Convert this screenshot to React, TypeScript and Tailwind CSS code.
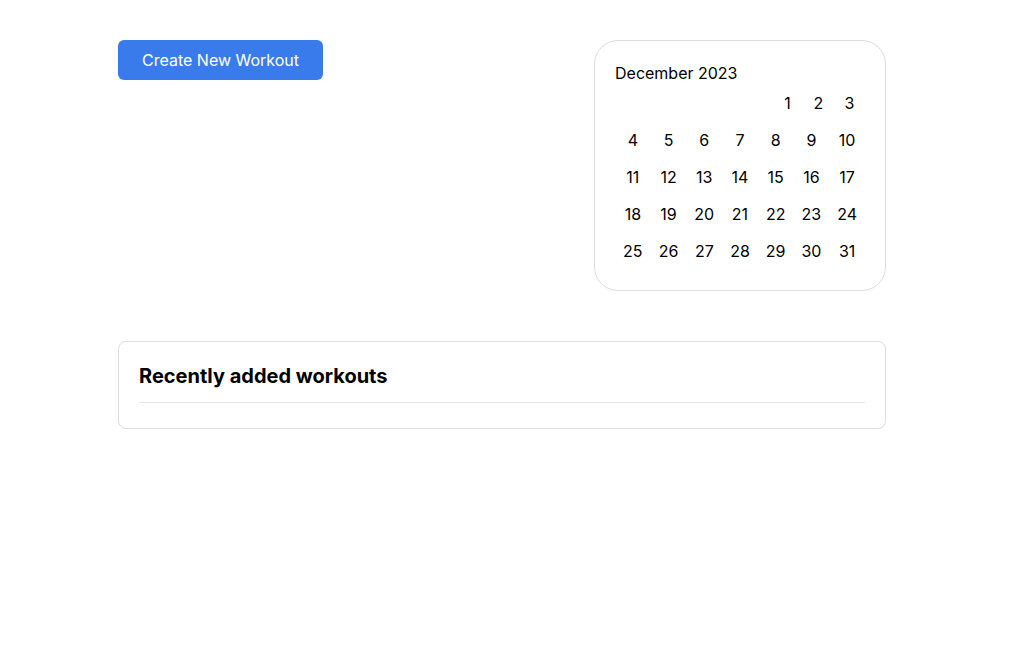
const days = Array.from({ length: 28 }, (_, i) => i + 4)

function Calendar() {
  return (
    <div className="w-[292px] rounded-3xl border border-[#dcdcdc] px-5 pt-[21px] pb-[21px]">
      <div className="text-base leading-[22px] text-black">December 2023</div>
      <div className="flex justify-end">
        {[1, 2, 3].map((d) => (
          <div key={d} className="w-[31px] h-[37px] flex items-center justify-center text-base">
            {d}
          </div>
        ))}
      </div>
      <div className="grid grid-cols-7">
        {days.map((d) => (
          <div key={d} className="h-[37px] flex items-center justify-center text-base">
            {d}
          </div>
        ))}
      </div>
    </div>
  )
}

export default function App() {
  return (
    <div className="min-h-screen bg-white text-black" style={{ fontFamily: "Inter, 'Noto Sans', sans-serif" }}>
      <div className="w-[768px] ml-[118px] pt-10">
        <div className="flex items-start justify-between">
          <button className="h-10 px-6 rounded-md bg-[#3a7bec] text-white text-base">
            Create New Workout
          </button>
          <Calendar />
        </div>
        <div className="mt-[50px] rounded-lg border border-[#dcdcdc] px-5 pt-[21px] pb-[25px]">
          <h2 className="text-xl leading-[27px] font-bold pb-3 border-b border-[#e5e5e5]">
            Recently added workouts
          </h2>
        </div>
      </div>
    </div>
  )
}
